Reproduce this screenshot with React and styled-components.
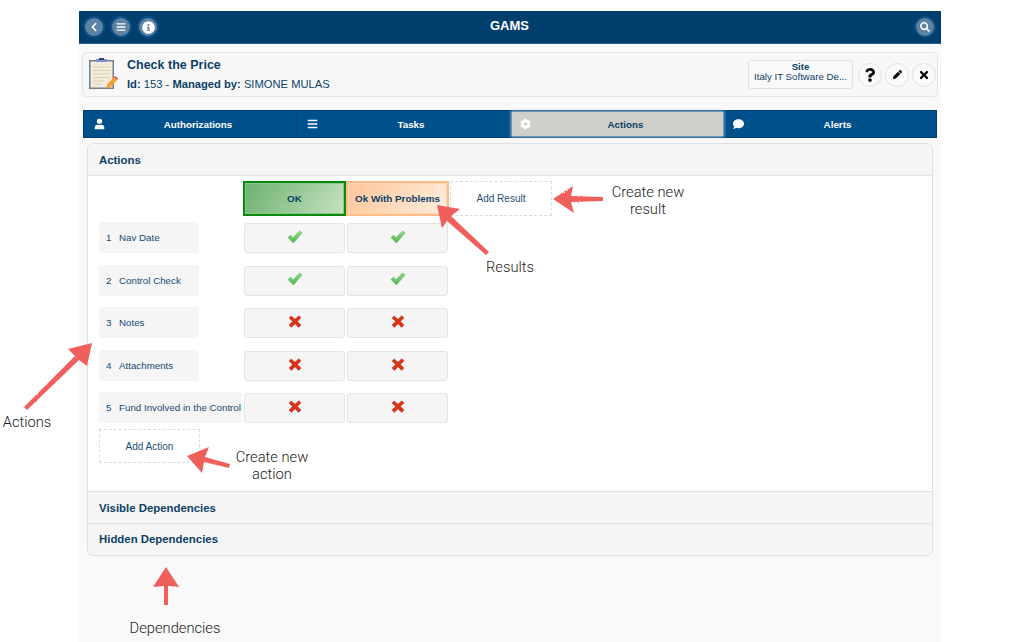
import React from "react";
import styled, { createGlobalStyle } from "styled-components";
import { FaChevronLeft, FaBars, FaInfoCircle, FaSearch, FaUser, FaCog, FaComment, FaQuestion, FaPen, FaTimes } from "react-icons/fa";

const Global = createGlobalStyle`
  html, body { margin: 0; padding: 0; background: #fff; }
  * { box-sizing: border-box; }
  body { font-family: "Liberation Sans", Arial, sans-serif; color: #0c3f68; }
`;

const Page = styled.div`
  position: relative;
  width: 1022px;
  height: 642px;
  overflow: hidden;
  padding: 11px 81px 0 79px;
`;
const Shell = styled.div`
  height: 631px;
  background: #f9f9f9;
  display: flex;
  flex-direction: column;
`;
const TopBar = styled.header`
  height: 33px;
  flex: none;
  background: #003e6d;
  border-bottom: 1px solid #2b5c84;
  display: grid;
  grid-template-columns: 1fr auto 1fr;
  align-items: center;
  padding: 0 5px 0 4px;
`;
const BarGroup = styled.div`
  display: flex;
  gap: 5px;
  justify-content: ${(p) => (p.$end ? "flex-end" : "flex-start")};
`;
const Brand = styled.div`
  color: #fff;
  font-weight: 700;
  font-size: 13px;
  line-height: 13px;
  padding-bottom: 3px;
`;
const CircleBtn = styled.span`
  width: 22px;
  height: 22px;
  border-radius: 50%;
  background: #5d83a3;
  border: 2px solid #0d4f84;
  color: #fff;
  display: flex;
  align-items: center;
  justify-content: center;
  font-size: 10px;
`;
const InfoBar = styled.section`
  flex: none;
  height: 45px;
  margin: 8px 3px 0;
  background: #f8f8f8;
  border: 1px solid #e5e5e5;
  border-radius: 5px;
  display: flex;
  align-items: center;
  padding: 0 1px 0 5px;
`;
const InfoText = styled.div`
  margin-left: 9px;
  flex: 1;
`;
const Title = styled.div`
  font-size: 12.5px;
  font-weight: 700;
  line-height: 14px;
  margin-bottom: 5px;
`;
const Meta = styled.div`
  font-size: 11.2px;
  line-height: 14px;
  b { font-weight: 700; }
`;
const SiteBox = styled.div`
  width: 105px;
  height: 29px;
  background: #f9f9f9;
  border: 1px solid #e2e2e2;
  border-radius: 3px;
  text-align: center;
  font-size: 9.7px;
  line-height: 10px;
  padding-top: 1px;
  margin-right: 2px;
  white-space: nowrap;
  b { display: block; font-weight: 700; font-size: 9.5px; }
`;
const RoundBtn = styled.span`
  width: 24px;
  height: 24px;
  border-radius: 50%;
  background: #fafafa;
  border: 1px solid #e2e2e2;
  color: #0a0a0a;
  display: flex;
  align-items: center;
  justify-content: center;
  font-size: ${(p) => p.$size || 11}px;
  margin-left: 3px;
`;
const Tabs = styled.nav`
  flex: none;
  height: 28px;
  margin: 13px 4px 0;
  background: #00508c;
  border: 1px solid #063e69;
  display: grid;
  grid-template-columns: repeat(4, 1fr);
`;
const Tab = styled.div`
  position: relative;
  display: flex;
  align-items: center;
  justify-content: center;
  font-size: 9.8px;
  font-weight: 700;
  padding-left: 16px;
  color: ${(p) => (p.$active ? "#0c3f68" : "#fff")};
  background: ${(p) => (p.$active ? "#cfcfc9" : "transparent")};
  border-right: ${(p) => (p.$last || p.$active ? "0" : "1px solid #0a4676")};
  margin: ${(p) => (p.$active ? "1px 0 1px 2px" : "0")};
  box-shadow: ${(p) => (p.$active ? "0 0 3px 1px #a9c3d8" : "none")};
`;
const TabIcon = styled.span`
  position: absolute;
  left: ${(p) => (p.$inset ? 8 : 10)}px;
  top: 50%;
  transform: translateY(-50%);
  display: flex;
  font-size: 11px;
  color: #fff;
`;
const Panel = styled.section`
  flex: none;
  height: 413px;
  margin: 5px 8px 0;
  border: 1px solid #e0e0e0;
  border-radius: 6px;
  overflow: hidden;
  background: #f5f5f5;
  display: flex;
  flex-direction: column;
`;
const PanelHead = styled.div`
  flex: ${(p) => p.$h}px 0 0;
  display: flex;
  align-items: center;
  padding: 0 0 ${(p) => p.$lift || 0}px 11px;
  font-size: 11.4px;
  font-weight: 700;
  background: #f5f5f5;
  & + & { border-top: 1px solid #e2e2e2; }
`;
const PanelBody = styled.div`
  height: 317px;
  flex: none;
  background: #fff;
  border-top: 1px solid #e4e4e4;
  border-bottom: 1px solid #e0e0e0;
  padding: 5px 0 0 11px;
`;
const Row = styled.div`
  display: grid;
  grid-template-columns: 144px 103px 103px 102px;
  margin-bottom: ${(p) => p.$gap}px;
  height: ${(p) => p.$h}px;
`;
const ResultHead = styled.div`
  border: 2px solid ${(p) => (p.$tone === "ok" ? "#0b8a12" : "#fdbd84")};
  background: ${(p) =>
    p.$tone === "ok"
      ? "linear-gradient(120deg, #6cb16e, #c6e1c1)"
      : "linear-gradient(120deg, #fdc698, #ffeede)"};
  box-shadow: inset 0 0 0 1px ${(p) => (p.$tone === "ok" ? "#8cc58c" : "#fed6b4")};
  display: flex;
  align-items: center;
  justify-content: center;
  font-size: 9.9px;
  font-weight: 700;
  white-space: nowrap;
`;
const AddBox = styled.div`
  border: 1px dashed #dcdcdc;
  display: flex;
  align-items: center;
  justify-content: center;
  font-size: 10px;
  color: #1b4f78;
  width: ${(p) => p.$w}px;
  height: ${(p) => p.$hgt}px;
  margin-left: ${(p) => p.$ml || 0}px;
  margin-top: ${(p) => p.$mt || 0}px;
`;
const Label = styled.div`
  width: ${(p) => (p.$wide ? "143px" : "100px")};
  height: 31px;
  background: #f5f5f5;
  border-radius: 3px;
  display: flex;
  align-items: center;
  font-size: 9.75px;
  padding-left: 7px;
  white-space: nowrap;
  color: #164a73;
`;
const LabelNum = styled.span`
  width: 13px;
  flex: none;
`;
const Cell = styled.div`
  height: 30px;
  margin: 1px 1px 0 1px;
  background: #f5f5f5;
  border: 1px solid #e4e4e4;
  border-radius: 3px;
  display: flex;
  align-items: center;
  justify-content: center;
  padding-bottom: 3px;
`;
const Overlay = styled.svg`
  position: absolute;
  inset: 0;
  pointer-events: none;
`;
const Note = styled.div`
  position: absolute;
  left: ${(p) => p.$x}px;
  top: ${(p) => p.$y}px;
  transform: translateX(-50%);
  width: 120px;
  text-align: center;
  font-family: Roboto, "Liberation Sans", sans-serif;
  font-weight: 300;
  font-size: 14.7px;
  line-height: 17px;
  color: #222;
`;

const Check = () => (
  <svg width="16" height="14" viewBox="0 0 16 14">
    <defs>
      <linearGradient id="chk" x1="0" y1="0" x2="0" y2="1">
        <stop offset="0" stopColor="#8fdc86" />
        <stop offset="1" stopColor="#4fb653" />
      </linearGradient>
    </defs>
    <path d="M1 7.500 L3.600 5.200 L6 7.800 L12.600 1 L15 3 L6.400 13 Z" fill="url(#chk)" stroke="#6bbd6b" strokeWidth=".7" strokeLinejoin="round" />
  </svg>
);
const Cross = () => (
  <svg width="14" height="13" viewBox="0 0 14 13">
    <path d="M1 3 L3.200 1 L7 4.200 L10.800 .8 L13 2.800 L9.400 6.400 L13 10 L10.600 12.400 L7 8.800 L3.400 12.400 L1 10 L4.600 6.400 Z" fill="#d9331c" stroke="#c22a14" strokeWidth=".5" strokeLinejoin="round" />
  </svg>
);
const Clipboard = () => (
  <svg width="30" height="34" viewBox="0 0 30 34">
    <rect x="1" y="2" width="25" height="29" fill="#6f7f8e" />
    <rect x="2.500" y="3.500" width="22" height="26" fill="#f3ecd9" />
    <rect x="8" y="1" width="11" height="3" fill="#7d8fd0" />
    <rect x="11" y="0" width="5" height="2" fill="#3c4450" />
    <g stroke="#d9d1bb" strokeWidth="1">
      <path d="M5 9h17M5 12.500h17M5 16h17M5 19.500h17M5 23h12M5 26h9" />
    </g>
    <path d="M18 31 L19.500 26 L26 19 L29 22 L22.500 29 Z" fill="#f0a030" />
    <path d="M26 19 L27.500 18 L30 20.500 L29 22 Z" fill="#d9534a" />
  </svg>
);

const rows = [
  ["Nav Date", true],
  ["Control Check", true],
  ["Notes", false],
  ["Attachments", false],
  ["Fund Involved in the Control", false],
];

const arrows = [
  "M553 199 L573 186 L571 196 L603 197 L603 201 L571 202 L574 213 Z",
  "M437 205 L460 209 L451 216 L489 252 L486 255 L447 221 L442 228 Z",
  "M92 343 L68 349 L75 356 L24 407 L27 410 L79 360 L87 366 Z",
  "M187 456 L209 447 L205 457 L230 464 L229 468 L204 462 L202 473 Z",
  "M166 567 L179 587 L168 586 L168 605 L164 605 L164 586 L153 587 Z",
];

export default function App() {
  return (
    <Page>
      <Global />
      <Shell>
        <TopBar>
          <BarGroup>
            <CircleBtn><FaChevronLeft /></CircleBtn>
            <CircleBtn><FaBars /></CircleBtn>
            <CircleBtn><FaInfoCircle size={13} /></CircleBtn>
          </BarGroup>
          <Brand>GAMS</Brand>
          <BarGroup $end>
            <CircleBtn><FaSearch /></CircleBtn>
          </BarGroup>
        </TopBar>
        <InfoBar>
          <Clipboard />
          <InfoText>
            <Title>Check the Price</Title>
            <Meta><b>Id:</b> 153 - <b>Managed by:</b> SIMONE MULAS</Meta>
          </InfoText>
          <SiteBox><b>Site</b>Italy IT Software De...</SiteBox>
          <RoundBtn $size={14}><FaQuestion /></RoundBtn>
          <RoundBtn><FaPen size={9} /></RoundBtn>
          <RoundBtn><FaTimes size={12} /></RoundBtn>
        </InfoBar>
        <Tabs>
          <Tab><TabIcon><FaUser /></TabIcon>Authorizations</Tab>
          <Tab><TabIcon><FaBars /></TabIcon>Tasks</Tab>
          <Tab $active><TabIcon $inset><FaCog /></TabIcon>Actions</Tab>
          <Tab $last><TabIcon><FaComment /></TabIcon>Alerts</Tab>
        </Tabs>
        <Panel>
          <PanelHead $h={31}>Actions</PanelHead>
          <PanelBody>
            <Row $h={35} $gap={6}>
              <span />
              <ResultHead $tone="ok">OK</ResultHead>
              <ResultHead $tone="warn">Ok With Problems</ResultHead>
              <AddBox $w={102} $hgt={35} $ml={1}>Add Result</AddBox>
            </Row>
            {rows.map(([name, ok], i) => (
              <Row key={name} $h={31} $gap={11.5}>
                <Label $wide={i === 4}><LabelNum>{i + 1}</LabelNum>{name}</Label>
                <Cell>{ok ? <Check /> : <Cross />}</Cell>
                <Cell>{ok ? <Check /> : <Cross />}</Cell>
              </Row>
            ))}
            <AddBox $w={101} $hgt={34} $mt={-5.5}>Add Action</AddBox>
          </PanelBody>
          <PanelHead $h={31}>Visible Dependencies</PanelHead>
          <PanelHead $h={32} $lift={2}>Hidden Dependencies</PanelHead>
        </Panel>
      </Shell>
      <Overlay width="1022" height="642">
        <defs>
          <filter id="rough" x="-10%" y="-10%" width="120%" height="120%">
            <feTurbulence type="fractalNoise" baseFrequency="0.7" numOctaves="2" result="n" />
            <feDisplacementMap in="SourceGraphic" in2="n" scale="2" />
          </filter>
        </defs>
        <g fill="#ef605c" filter="url(#rough)">
          {arrows.map((d) => <path key={d} d={d} />)}
        </g>
      </Overlay>
      <Note $x={648} $y={184}>Create new<br />result</Note>
      <Note $x={510} $y={259}>Results</Note>
      <Note $x={27} $y={414}>Actions</Note>
      <Note $x={272} $y={449}>Create new<br />action</Note>
      <Note $x={175} $y={620}>Dependencies</Note>
    </Page>
  );
}
